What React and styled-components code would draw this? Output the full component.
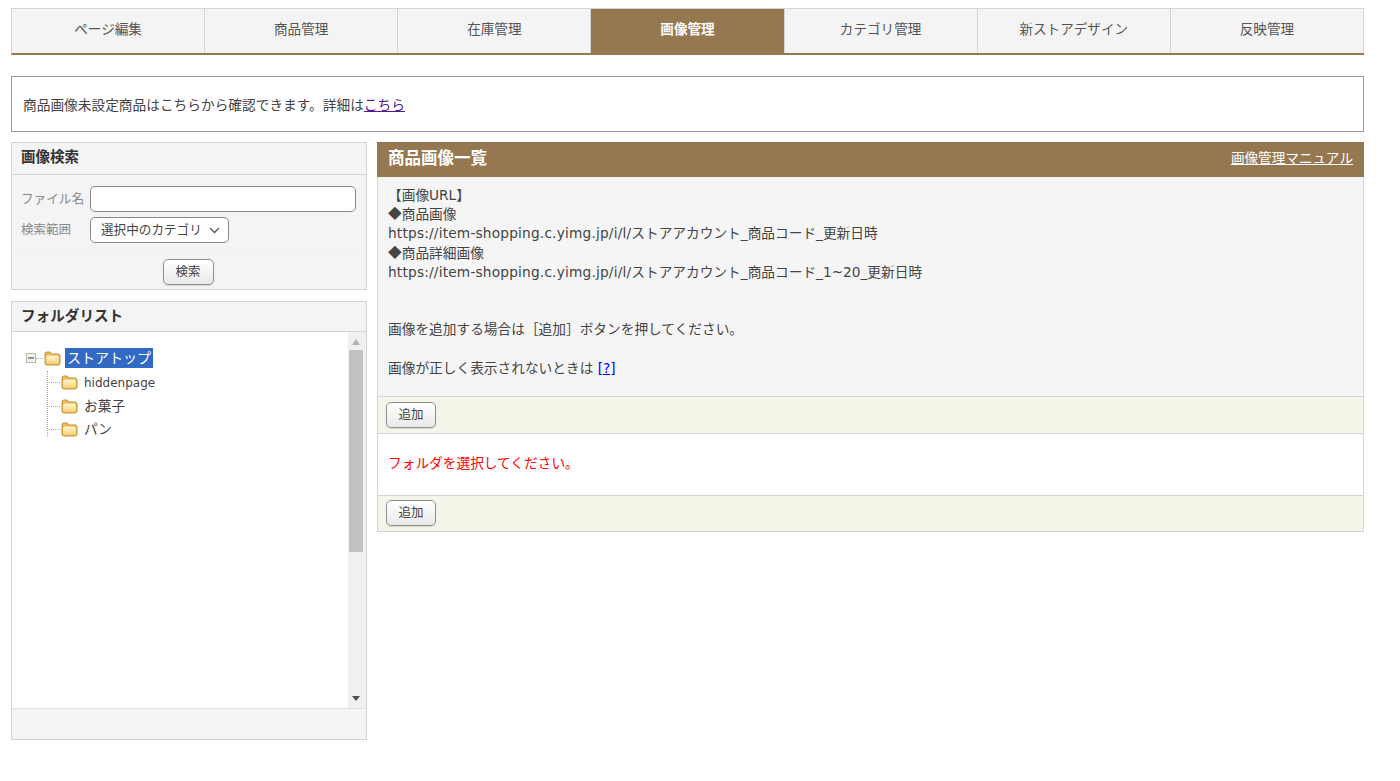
import React from "react";
import styled, { createGlobalStyle } from "styled-components";

const brown = "#967850";

const Global = createGlobalStyle`
    html, body {
        margin: 0;
        padding: 0;
        background: #fff;
    }
    body {
        font-family: "DejaVu Sans", "Noto Sans CJK JP", sans-serif;
        font-size: 13.7px;
        line-height: 19.2px;
        color: #444;
    }
`;

const Page = styled.div`
    width: 1353px;
    margin-left: 11px;
    padding-top: 8px;
    display: flex;
    flex-direction: column;
`;

const Nav = styled.ul`
    display: flex;
    list-style: none;
    margin: 0;
    padding: 0;
    height: 47px;
    box-sizing: border-box;
    border-top: 1px solid #d4d4d4;
    border-left: 1px solid #d4d4d4;
    border-bottom: 2px solid ${brown};
`;

const NavItem = styled.li`
    flex: 1;
    display: flex;
    align-items: center;
    justify-content: center;
    padding-bottom: 3px;
    border-right: 1px solid #d4d4d4;
    background: ${(p) => (p.$active ? brown : "#f4f4f4")};
    color: ${(p) => (p.$active ? "#fff" : "#555")};
    font-weight: ${(p) => (p.$active ? 700 : 400)};
    font-size: 13.6px;
`;

const Notice = styled.div`
    margin-top: 21px;
    height: 56px;
    box-sizing: border-box;
    border: 1px solid #999;
    padding: 4px 11px 0;
    display: flex;
    align-items: center;
`;

const VisitedLink = styled.a`
    color: #551a8b;
    text-decoration: underline;
`;

const Columns = styled.div`
    margin-top: 10px;
    display: flex;
    gap: 10px;
    align-items: flex-start;
`;

const Side = styled.aside`
    width: 356px;
    flex: none;
    display: flex;
    flex-direction: column;
    gap: 11px;
`;

const Panel = styled.section`
    border: 1px solid #d4d4d4;
    background: #f4f4f4;
    display: flex;
    flex-direction: column;
`;

const PanelTitle = styled.h2`
    margin: 0;
    height: ${(p) => p.$height}px;
    box-sizing: border-box;
    padding: 0 9px 2px;
    display: flex;
    align-items: center;
    font-size: ${(p) => p.$size}px;
    font-weight: 700;
    color: #333;
    border-bottom: 1px solid #d4d4d4;
`;

const SearchForm = styled.div`
    padding: 11px 9px 10px;
    display: grid;
    grid-template-columns: 70px 1fr;
    row-gap: 5px;
    align-items: center;
    border-bottom: 1px solid #efefef;
`;

const FieldLabel = styled.label`
    color: #888;
    font-size: ${(p) => p.$size}px;
`;

const TextInput = styled.input`
    width: 266px;
    height: 26px;
    box-sizing: border-box;
    border: 1px solid #888;
    border-radius: 5px;
    background: #fff;
    padding: 0 6px;
    margin-left: -1px;
`;

const ScopeSelect = styled.div`
    width: 139px;
    height: 26px;
    box-sizing: border-box;
    margin-left: -1px;
    border: 1px solid #888;
    border-radius: 5px;
    background: #fff;
    padding: 0 8px 0 10px;
    display: flex;
    align-items: center;
    justify-content: space-between;
    white-space: nowrap;
    overflow: hidden;
    font-size: 12.6px;
`;

const SearchFoot = styled.div`
    height: 35px;
    padding-right: 2px;
    display: flex;
    align-items: center;
    justify-content: center;
`;

const Button = styled.button`
    width: ${(p) => p.$width}px;
    height: 26px;
    padding: 0;
    border: 1px solid #8e8e8e;
    border-radius: 5px;
    background: linear-gradient(#fff, #e9e9e9);
    box-shadow: 0 1px 1px rgba(0, 0, 0, 0.12);
    color: #444;
    font: inherit;
    font-size: ${(p) => p.$size}px;
`;

const TreeArea = styled.div`
    height: 376px;
    background: #fff;
    display: flex;
    justify-content: space-between;
    border-bottom: 1px solid #e2e2e2;
`;

const Tree = styled.div`
    padding: 15px 0 0 14px;
`;

const RootRow = styled.div`
    display: flex;
    align-items: center;
    height: 22px;
`;

const RootLabel = styled.span`
    background: #316ac5;
    color: #fff;
    font-size: 14px;
    padding: 0 2px;
    margin-left: 4px;
    line-height: 20px;
`;

const ChildList = styled.ul`
    list-style: none;
    margin: 2px 0 0 21px;
    padding: 0;
    border-left: 1px dotted #aaa;
    height: 66px;
`;

const ChildRow = styled.li`
    display: flex;
    align-items: center;
    height: 23.5px;
    padding-left: 1px;
    &::before {
        content: "";
        width: 11px;
        border-top: 1px dotted #aaa;
        margin-right: 1px;
    }
`;

const ChildLabel = styled.span`
    margin-left: 6px;
    font-size: 13.7px;
    color: #444;
`;

const LatinName = styled.span`
    font-size: 12px;
`;

const Scrollbar = styled.div`
    width: 18px;
    background: #f0f0f0;
    display: flex;
    flex-direction: column;
    align-items: center;
    padding-top: 7px;
    box-sizing: border-box;
`;

const ScrollThumb = styled.div`
    width: 14px;
    height: 202px;
    margin-top: 5px;
    margin-right: 3px;
    background: #c1c1c1;
`;

const ArrowUp = styled.div`
    width: 0;
    height: 0;
    margin-right: 3px;
    border-left: 4px solid transparent;
    border-right: 4px solid transparent;
    border-bottom: 6px solid #b4b4b4;
`;

const ArrowDown = styled.div`
    width: 0;
    height: 0;
    margin-top: auto;
    margin-bottom: 7px;
    margin-right: 3px;
    border-left: 4px solid transparent;
    border-right: 4px solid transparent;
    border-top: 5px solid #505050;
`;

const PanelFoot = styled.div`
    height: 30px;
    background: #f4f4f4;
`;

const Main = styled.main`
    flex: 1;
    border: 1px solid #d4d4d4;
    border-top: none;
    display: flex;
    flex-direction: column;
`;

const MainHeader = styled.header`
    height: 35px;
    margin: 0 -1px;
    background: ${brown};
    padding: 0 11px 1px;
    box-sizing: border-box;
    display: flex;
    align-items: center;
    justify-content: space-between;
    color: #fff;
`;

const MainTitle = styled.h1`
    margin: 0;
    font-size: 16.5px;
    font-weight: 700;
`;

const ManualLink = styled.a`
    color: #fff;
    font-size: 13.6px;
    text-decoration: underline;
`;

const Info = styled.div`
    height: 219px;
    box-sizing: border-box;
    background: #f5f5f5;
    padding: 9px 10px 0;
`;

const InfoLine = styled.div`
    height: 19.2px;
    white-space: pre;
`;

const Diamond = styled.span`
    font-family: "Noto Sans CJK JP", sans-serif;
    line-height: 1;
    vertical-align: 1px;
`;

const Url = styled.span`
    letter-spacing: 0.2px;
`;

const HelpLink = styled.a`
    color: #00e;
    text-decoration: underline;
`;

const ActionBar = styled.div`
    height: ${(p) => p.$height}px;
    box-sizing: border-box;
    background: #f4f4e8;
    border-top: 1px solid #d4d4d4;
    padding: 0 0 1px 8px;
    display: flex;
    align-items: center;
`;

const Message = styled.div`
    height: 62px;
    box-sizing: border-box;
    border-top: 1px solid #d4d4d4;
    background: #fff;
    padding: 0 10px 2px;
    display: flex;
    align-items: center;
    color: #f00;
`;

const tabs = [
    "ページ編集",
    "商品管理",
    "在庫管理",
    "画像管理",
    "カテゴリ管理",
    "新ストアデザイン",
    "反映管理",
];

const FolderIcon = () => (
    <svg width="17" height="15" viewBox="0 0 17 15">
        <defs>
            <linearGradient id="folderFill" x1="0" y1="0" x2="0" y2="1">
                <stop offset="0" stopColor="#fff6d0" />
                <stop offset="1" stopColor="#fbd27a" />
            </linearGradient>
        </defs>
        <path
            d="M1 12V3a2 2 0 0 1 2-2h3l2 2h6a2 2 0 0 1 2 2v7a2 2 0 0 1-2 2H3a2 2 0 0 1-2-2z"
            fill="#eeb850"
            stroke="#c09440"
        />
        <rect x="2.2" y="4.6" width="12.6" height="8.2" rx="1.5" fill="url(#folderFill)" />
    </svg>
);

const MinusBox = () => (
    <svg width="10" height="10" viewBox="0 0 10 10">
        <rect x="0.5" y="0.5" width="9" height="9" fill="#f4f4ec" stroke="#b8b8a8" />
        <path d="M2 5h6" stroke="#333" />
    </svg>
);

const Chevron = () => (
    <svg width="11" height="7" viewBox="0 0 11 7">
        <path d="M1 1l4.5 4.5L10 1" fill="none" stroke="#555" strokeWidth="1.3" />
    </svg>
);

const RootDash = styled.span`
    width: 7px;
    border-top: 1px dotted #aaa;
    margin-right: 1px;
`;

const urlBase = "https://item-shopping.c.yimg.jp/i/l/";

const App = () => {
    return (
        <Page>
            <Global />
            <Nav>
                {tabs.map((tab) => (
                    <NavItem key={tab} $active={tab === "画像管理"}>
                        {tab}
                    </NavItem>
                ))}
            </Nav>
            <Notice>
                商品画像未設定商品はこちらから確認できます。詳細は
                <VisitedLink href="#">こちら</VisitedLink>
            </Notice>
            <Columns>
                <Side>
                    <Panel>
                        <PanelTitle $height={32} $size={14.5}>
                            画像検索
                        </PanelTitle>
                        <SearchForm>
                            <FieldLabel $size={12.6}>ファイル名</FieldLabel>
                            <TextInput />
                            <FieldLabel $size={12.5}>検索範囲</FieldLabel>
                            <ScopeSelect>
                                選択中のカテゴリ
                                <Chevron />
                            </ScopeSelect>
                        </SearchForm>
                        <SearchFoot>
                            <Button $width={51} $size={12.5}>検索</Button>
                        </SearchFoot>
                    </Panel>
                    <Panel>
                        <PanelTitle $height={30} $size={14.6}>
                            フォルダリスト
                        </PanelTitle>
                        <TreeArea>
                            <Tree>
                                <RootRow>
                                    <MinusBox />
                                    <RootDash />
                                    <FolderIcon />
                                    <RootLabel>ストアトップ</RootLabel>
                                </RootRow>
                                <ChildList>
                                    <ChildRow>
                                        <FolderIcon />
                                        <ChildLabel>
                                            <LatinName>hiddenpage</LatinName>
                                        </ChildLabel>
                                    </ChildRow>
                                    <ChildRow>
                                        <FolderIcon />
                                        <ChildLabel>お菓子</ChildLabel>
                                    </ChildRow>
                                    <ChildRow>
                                        <FolderIcon />
                                        <ChildLabel>パン</ChildLabel>
                                    </ChildRow>
                                </ChildList>
                            </Tree>
                            <Scrollbar>
                                <ArrowUp />
                                <ScrollThumb />
                                <ArrowDown />
                            </Scrollbar>
                        </TreeArea>
                        <PanelFoot />
                    </Panel>
                </Side>
                <Main>
                    <MainHeader>
                        <MainTitle>商品画像一覧</MainTitle>
                        <ManualLink href="#">画像管理マニュアル</ManualLink>
                    </MainHeader>
                    <Info>
                        <InfoLine>【画像URL】</InfoLine>
                        <InfoLine>
                            <Diamond>◆</Diamond>商品画像
                        </InfoLine>
                        <InfoLine>
                            <Url>{urlBase}</Url>ストアアカウント_商品コード_更新日時
                        </InfoLine>
                        <InfoLine>
                            <Diamond>◆</Diamond>商品詳細画像
                        </InfoLine>
                        <InfoLine>
                            <Url>{urlBase}</Url>ストアアカウント_商品コード_1~20_更新日時
                        </InfoLine>
                        <InfoLine />
                        <InfoLine />
                        <InfoLine>画像を追加する場合は［追加］ボタンを押してください。</InfoLine>
                        <InfoLine />
                        <InfoLine>
                            画像が正しく表示されないときは <HelpLink href="#">[?]</HelpLink>
                        </InfoLine>
                    </Info>
                    <ActionBar $height={37}>
                        <Button $width={50} $size={12.5}>追加</Button>
                    </ActionBar>
                    <Message>フォルダを選択してください。</Message>
                    <ActionBar $height={36}>
                        <Button $width={50} $size={12.5}>追加</Button>
                    </ActionBar>
                </Main>
            </Columns>
        </Page>
    );
};

export default App;
